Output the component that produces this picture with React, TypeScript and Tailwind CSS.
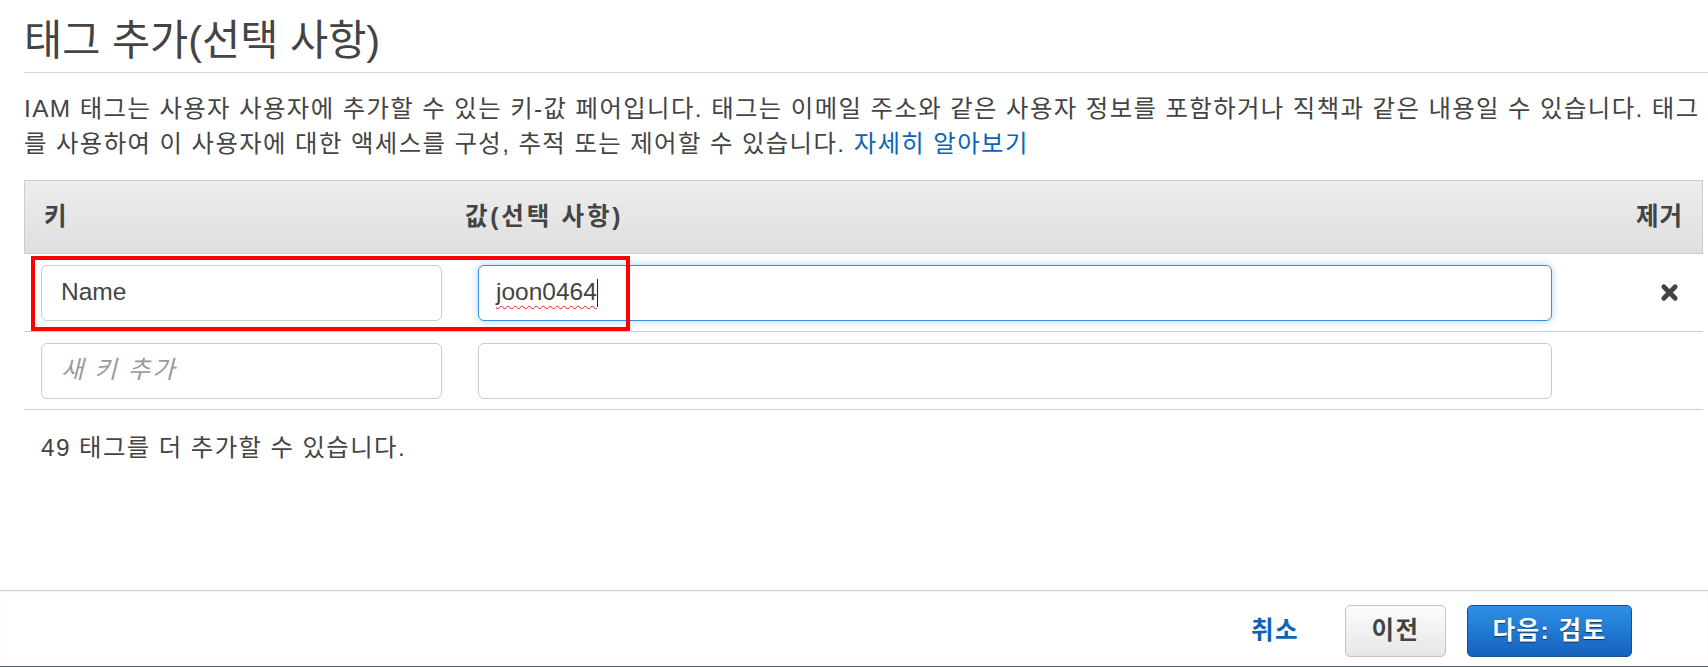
import React from 'react'

function RemoveIcon() {
  return (
    <svg width="19" height="19" viewBox="0 0 20 20" aria-hidden="true">
      <path d="M4 4 L16 16 M16 4 L4 16" stroke="#444" strokeWidth="5" strokeLinecap="round" fill="none" />
    </svg>
  )
}

export default function App() {
  return (
    <div className="h-[667px] w-full flex flex-col bg-white text-[#444] font-['Liberation_Sans','Noto_Sans_CJK_KR',sans-serif] overflow-hidden">
      <div className="flex-1 pl-[24px]">
        <div className="pt-[16px] pb-[6px] border-b border-[#d5d5d5]">
          <h2 className="text-[41.5px] leading-[50px] font-normal">태그 추가(선택 사항)</h2>
        </div>

        <p className="mt-[18px] w-[1684px] text-[24.4px] leading-[35px] tracking-[1.4px]">
          IAM 태그는 사용자 사용자에 추가할 수 있는 키-값 페어입니다. 태그는 이메일 주소와 같은 사용자 정보를 포함하거나 직책과 같은 내용일 수 있습니다. 태그를 사용하여 이 사용자에 대한 액세스를 구성, 추적 또는 제어할 수 있습니다.{' '}
          <span className="text-[#0b64b8]">자세히 알아보기</span>
        </p>

        <div className="mt-[19px] w-[1679px]">
          {/* header */}
          <div className="grid grid-cols-[441px_1fr_116px] items-center h-[74px] border border-[#cccccc] bg-linear-to-b from-[#ededed] to-[#dfdfdf] font-bold text-[24.5px]">
            <div className="pl-[19px]">키</div>
            <div className="-ml-px tracking-[2.8px]">값(선택 사항)</div>
            <div className="text-right pr-[19px] tracking-[1px]">제거</div>
          </div>

          {/* row 1 */}
          <div className="relative grid grid-cols-[441px_1fr_116px] items-center h-[78px] border-b border-[#cccccc] text-[24.5px]">
            <div className="pl-[17px]">
              <div className="w-[401px] h-[56px] flex items-center px-[19px] border border-[#cccccc] rounded-[6px] bg-white">
                Name
              </div>
            </div>
            <div className="pl-[13px]">
              <div className="w-[1074px] h-[56px] flex items-center px-[17px] border border-[#3a8ee6] rounded-[6px] bg-white shadow-[0_0_8px_rgba(102,175,233,0.55)]">
                <span className="underline decoration-wavy decoration-[#e02020] decoration-1 underline-offset-[5px]">joon0464</span>
                <span className="w-px h-[28px] bg-[#222]" />
              </div>
            </div>
            <div className="flex justify-end pr-[24px]">
              <RemoveIcon />
            </div>
            <div className="absolute left-[7px] top-[2px] w-[599px] h-[75px] border-4 border-[#ff0000] pointer-events-none" />
          </div>

          {/* row 2 */}
          <div className="grid grid-cols-[441px_1fr_116px] items-center h-[78px] border-b border-[#cccccc] text-[24.5px]">
            <div className="pl-[17px]">
              <div className="w-[401px] h-[56px] flex items-center px-[19px] border border-[#cccccc] rounded-[6px] bg-white italic text-[#999] tracking-[2px]">
                새 키 추가
              </div>
            </div>
            <div className="pl-[13px]">
              <div className="w-[1074px] h-[56px] border border-[#cccccc] rounded-[6px] bg-white" />
            </div>
            <div />
          </div>

          <p className="mt-[21px] pl-[17px] text-[24.4px] leading-[33px] tracking-[1.4px]">49 태그를 더 추가할 수 있습니다.</p>
        </div>
      </div>

      {/* footer */}
      <div className="h-[76px] flex items-start justify-end pt-[14px] pr-[76px] border-t border-[#cfcfcf] shadow-[inset_0_1px_2px_rgba(0,0,0,0.06)] text-[24.5px] font-bold tracking-[1.5px]">
        <button className="h-[52px] mr-[46px] text-[#0b64b8]">취소</button>
        <button className="h-[52px] w-[101px] mr-[21px] rounded-[5px] border border-[#c4c4c4] bg-linear-to-b from-[#fcfcfc] to-[#e6e6e6] text-[#444]">
          이전
        </button>
        <button className="h-[52px] w-[165px] rounded-[5px] border border-[#1b4f88] bg-linear-to-b from-[#2f90e8] to-[#1462bc] text-white [text-shadow:0_1px_1px_rgba(0,0,0,0.55)]">
          다음: 검토
        </button>
      </div>
      <div className="h-px bg-[#545b64]" />
    </div>
  )
}
